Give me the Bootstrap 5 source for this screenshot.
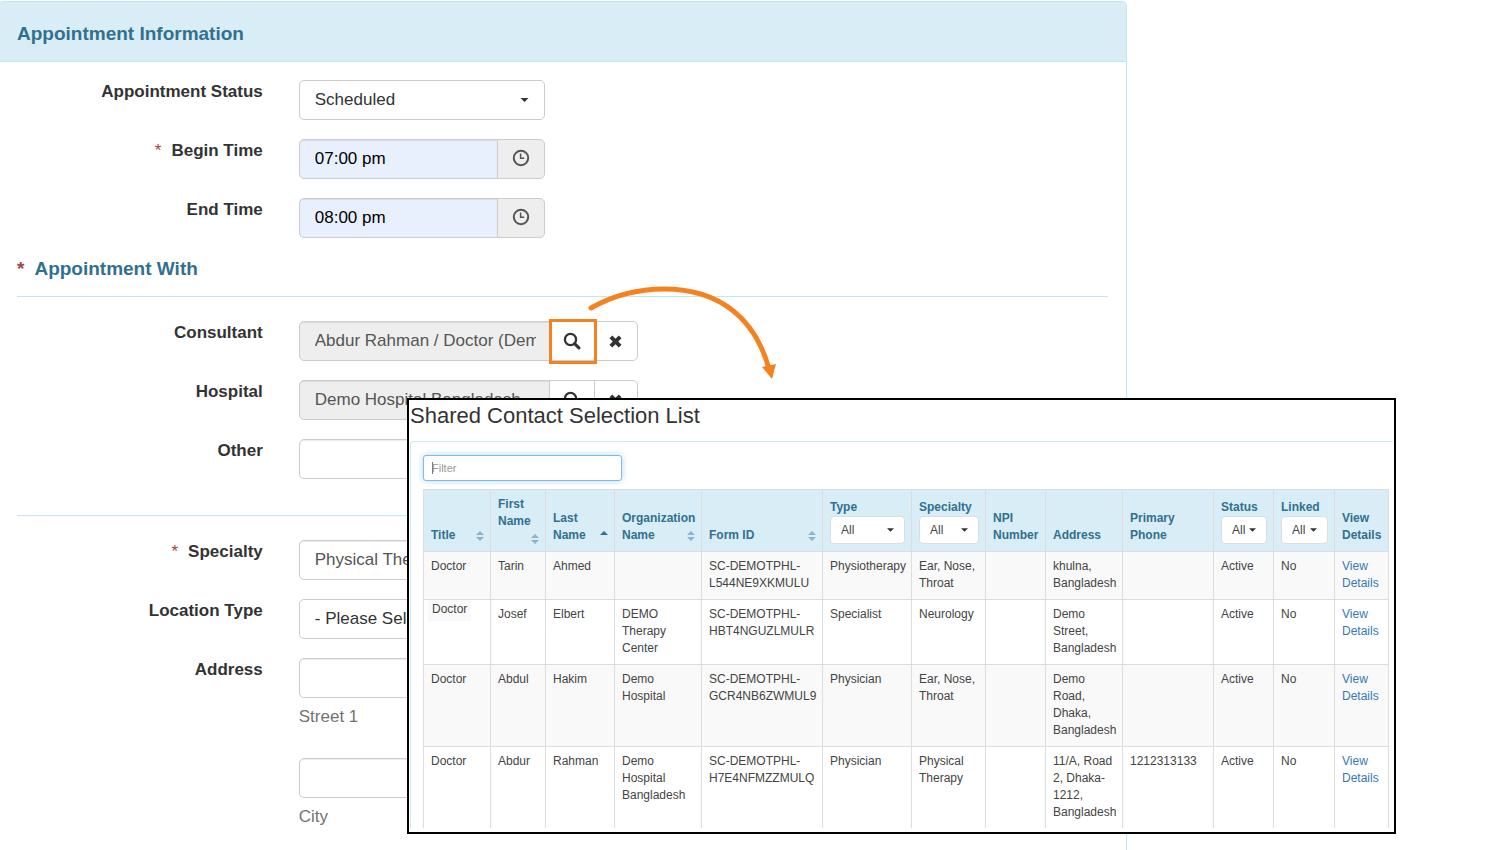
<!DOCTYPE html>
<html lang="en">
<head>
<meta charset="utf-8">
<meta name="viewport" content="width=device-width, initial-scale=1">
<title>Appointment Information</title>
<link href="https://cdn.jsdelivr.net/npm/bootstrap@5.3.0/dist/css/bootstrap.min.css" rel="stylesheet">
<style>
  :root { --line: #bce8f1; --head: #d9edf7; --ink: #31708f; --accent: #f58220; }
  body { font-family: "Liberation Sans", Arial, sans-serif; font-size: 17px; line-height: 24px; color: #333; }
  .page-grid { display: grid; grid-template-columns: minmax(0, 1129fr) 383fr; margin-left: -2px; padding-top: 1px; min-height: 100vh; overflow: hidden; }
  .info-panel { border: 1px solid var(--line); border-bottom: 0; border-radius: 5px 5px 0 0; }
  .info-head { background: var(--head); border-bottom: 1px solid var(--line); padding: 20px 18px 15px; border-radius: 4px 4px 0 0; }
  .info-title { font-size: 19px; line-height: 24px; font-weight: 700; color: var(--ink); margin: 0; }
  .star { color: #a94442; margin-right: 10px; }
  .field-label .star { font-weight: 400; }
  .info-form { padding: 18px 18px 0; }
  .info-form .row { --bs-gutter-x: 36px; margin-bottom: 19px; }
  .info-form .field-label { text-align: right; font-weight: 700; line-height: 24px; }
  .section-line { border-bottom: 1px solid var(--line); margin-bottom: 24px; padding-bottom: 15px; }
  .section-gap { padding-top: 2px; }
  .form-control, .form-select { font-size: 17px; line-height: 24px; height: 40px; padding: 6px 15px; border-color: #ccc; border-radius: 5px; color: #333; }
  .form-control { box-shadow: inset 0 1px 1px rgba(0,0,0,.08); color: #555; }
  .form-select { background-image: url("data:image/svg+xml,%3Csvg xmlns='http://www.w3.org/2000/svg' viewBox='0 0 8 4'%3E%3Cpath fill='%23333' d='M0 0h8L4 4z'/%3E%3C/svg%3E"); background-size: 9px 4px; background-position: right 15px center; }
  .w-time { width: 246px; max-width: 100%; }
  .w-pick { width: 339px; max-width: 100%; }
  .time-box { background: #e8f0fe; color: #000; }
  .form-control[readonly].locked { background: #eee; padding-right: 13px; }
  .time-btn, .pick-btn { display: flex; align-items: center; justify-content: center; padding: 0; border: 1px solid #ccc; border-radius: 5px; }
  .time-btn { width: 48px; padding-bottom: 3px; background: #eee; color: #555; }
  .pick-btn { width: 46px; background: #fff; color: #333; }
  .pick-btn:last-child { width: 44px; }
  .input-group .picked { z-index: 6; }
  .picked::after { content: ""; position: absolute; inset: -3px -3px -4px -1px; border: 3px solid var(--accent); }
  .arrow { position: absolute; left: 285px; top: -38px; z-index: 7; pointer-events: none; }
  .help { color: #737373; margin-top: 7px; }
  .address-next { padding-top: 10px; }

  .contact-box { position: absolute; left: 409px; top: 398px; width: 989px; border: 2px solid #000; background: #fff; z-index: 10; padding: 0 1px 4px; font-size: 12px; line-height: 17px; color: #444; }
  .contact-title { font-size: 22px; line-height: 32px; margin: 0 0 9px; color: #333; }
  .contact-body { border: 1px solid #c8eef4; border-width: 1px 0 0 1px; border-radius: 4px 0 0 0; padding: 13px 4px 0 12px; }
  .form-control.filter { width: 199px; height: 26px; font-size: 11px; line-height: 16px; padding: 4px 8px; border-color: #7db9ea; border-radius: 3px; box-shadow: 0 0 6px rgba(102,175,233,.5); margin-bottom: 8px; background: linear-gradient(#777, #777) 8px center / 1px 12px no-repeat #fff; }
  .filter::placeholder { color: #999; }
  .contacts { table-layout: fixed; width: 100%; border-collapse: collapse; }
  .contacts th, .contacts td { border: 1px solid #ddd; padding: 6px 0 7px 7px; vertical-align: top; }
  .contacts th { background: var(--head); color: var(--ink); vertical-align: bottom; position: relative; height: 62px; }
  .contacts tbody tr:nth-child(odd) td { background: #f9f9f9; }
  .contacts tbody tr:last-child td { border-bottom: 0; }
  .contacts a { color: #337ab7; text-decoration: none; }
  .contacts .sort { position: absolute; right: 6px; bottom: 10px; }
  .contacts th.tight { padding-bottom: 21px; }
  .contacts .tight .sort { bottom: 7px; }
  .contacts th.pick-col { padding-right: 6px; }
  .contacts .form-select { font-size: 12px; line-height: 16px; height: 28px; padding: 4px 10px; border-color: #ddd; border-radius: 4px; background-size: 7px 4px; background-position: right 10px center; color: #444; font-weight: 400; }
  .contacts label { display: block; }
  .contacts td.tag-cell { padding: 0 0 0 4px; }
  .tag { display: inline-block; background: #f9f9f9; padding: 1px 4px 3px; }
</style>
</head>
<body>
<main class="page-grid position-relative">
  <section class="info-panel">
    <header class="info-head"><h1 class="info-title">Appointment Information</h1></header>
    <form class="info-form">
      <div class="row">
        <label class="col-3 field-label" for="status">Appointment Status</label>
        <div class="col-9"><select class="form-select w-time" id="status"><option>Scheduled</option></select></div>
      </div>
      <div class="row">
        <label class="col-3 field-label" for="begin"><span class="star">*</span>Begin Time</label>
        <div class="col-9"><div class="input-group w-time">
          <input class="form-control time-box" id="begin" value="07:00 pm">
          <button class="btn time-btn" type="button" aria-label="Pick begin time"><svg width="18" height="18" viewBox="0 0 18 18" fill="none" stroke="currentColor" stroke-width="2"><circle cx="9" cy="9" r="7.2"/><path d="M8.6 4.5v4.8h3.6" stroke-width="1.5"/></svg></button>
        </div></div>
      </div>
      <div class="row">
        <label class="col-3 field-label" for="end">End Time</label>
        <div class="col-9"><div class="input-group w-time">
          <input class="form-control time-box" id="end" value="08:00 pm">
          <button class="btn time-btn" type="button" aria-label="Pick end time"><svg width="18" height="18" viewBox="0 0 18 18" fill="none" stroke="currentColor" stroke-width="2"><circle cx="9" cy="9" r="7.2"/><path d="M8.6 4.5v4.8h3.6" stroke-width="1.5"/></svg></button>
        </div></div>
      </div>

      <div class="section-line"><h2 class="info-title"><span class="star">*</span>Appointment With</h2></div>

      <div class="row">
        <label class="col-3 field-label" for="consultant">Consultant</label>
        <div class="col-9"><div class="position-relative w-pick">
          <div class="input-group">
            <input class="form-control locked" id="consultant" readonly value="Abdur Rahman / Doctor (Demo Hospital)">
            <button class="btn pick-btn picked" type="button" aria-label="Find consultant"><svg width="18" height="18" viewBox="0 0 18 18" fill="none" stroke="currentColor"><circle cx="7.5" cy="7.5" r="5.6" stroke-width="2.3"/><path d="M11.6 11.6l4.3 4.3" stroke-width="3" stroke-linecap="round"/></svg></button>
            <button class="btn pick-btn" type="button" aria-label="Clear consultant"><svg width="13" height="13" viewBox="0 0 14 14" stroke="currentColor" stroke-width="4.2"><path d="M2 2l10 10M12 2L2 12"/></svg></button>
          </div>
          <svg class="arrow" width="200" height="100" viewBox="0 0 200 100" fill="none"><path d="M7 25C30 12 55 6 80 6C138 6 172 38 185 86" stroke="#f58220" stroke-width="5" stroke-linecap="round"/><path d="M178 84l14-3-4 15z" fill="#f58220"/></svg>
        </div></div>
      </div>
      <div class="row">
        <label class="col-3 field-label" for="hospital">Hospital</label>
        <div class="col-9"><div class="input-group w-pick">
          <input class="form-control locked" id="hospital" readonly value="Demo Hospital Bangladesh">
          <button class="btn pick-btn" type="button" aria-label="Find hospital"><svg width="18" height="18" viewBox="0 0 18 18" fill="none" stroke="currentColor"><circle cx="7.5" cy="7.5" r="5.6" stroke-width="2.3"/><path d="M11.6 11.6l4.3 4.3" stroke-width="3" stroke-linecap="round"/></svg></button>
          <button class="btn pick-btn" type="button" aria-label="Clear hospital"><svg width="13" height="13" viewBox="0 0 14 14" stroke="currentColor" stroke-width="4.2"><path d="M2 2l10 10M12 2L2 12"/></svg></button>
        </div></div>
      </div>
      <div class="row">
        <label class="col-3 field-label" for="other">Other</label>
        <div class="col-9"><input class="form-control w-pick" id="other"></div>
      </div>

      <div class="section-line section-gap"></div>

      <div class="row">
        <label class="col-3 field-label" for="specialty"><span class="star">*</span>Specialty</label>
        <div class="col-9"><input class="form-control w-pick" id="specialty" value="Physical Therapy"></div>
      </div>
      <div class="row">
        <label class="col-3 field-label" for="location">Location Type</label>
        <div class="col-9"><select class="form-select w-time" id="location"><option>- Please Select -</option></select></div>
      </div>
      <div class="row">
        <label class="col-3 field-label" for="street">Address</label>
        <div class="col-9"><input class="form-control w-pick" id="street"><div class="help">Street 1</div></div>
      </div>
      <div class="row justify-content-end address-next">
        <div class="col-9"><input class="form-control w-pick" id="city" aria-label="City"><div class="help">City</div></div>
      </div>
    </form>
  </section>

  <section class="contact-box">
    <h2 class="contact-title">Shared Contact Selection List</h2>
    <div class="contact-body">
      <input class="form-control filter" placeholder="Filter" aria-label="Filter">
      <table class="contacts">
        <colgroup><col style="width:67px"><col style="width:55px"><col style="width:69px"><col style="width:87px"><col style="width:121px"><col style="width:89px"><col style="width:74px"><col style="width:60px"><col style="width:77px"><col style="width:91px"><col style="width:60px"><col style="width:61px"><col></colgroup>
        <thead><tr>
          <th>Title<svg class="sort" width="8" height="10" viewBox="0 0 8 10" fill="#8db4c9"><path d="M0 4h8L4 0zM0 6h8L4 10z"/></svg></th>
          <th class="tight">First Name<svg class="sort" width="8" height="10" viewBox="0 0 8 10" fill="#8db4c9"><path d="M0 4h8L4 0zM0 6h8L4 10z"/></svg></th>
          <th>Last<br>Name<svg class="sort" width="8" height="10" viewBox="0 0 8 10" fill="#31708f"><path d="M0 4h8L4 0z"/></svg></th>
          <th>Organization Name<svg class="sort" width="8" height="10" viewBox="0 0 8 10" fill="#8db4c9"><path d="M0 4h8L4 0zM0 6h8L4 10z"/></svg></th>
          <th>Form ID<svg class="sort" width="8" height="10" viewBox="0 0 8 10" fill="#8db4c9"><path d="M0 4h8L4 0zM0 6h8L4 10z"/></svg></th>
          <th class="pick-col"><label for="f-type">Type</label><select class="form-select" id="f-type"><option>All</option></select></th>
          <th class="pick-col"><label for="f-spec">Specialty</label><select class="form-select" id="f-spec"><option>All</option></select></th>
          <th>NPI Number</th>
          <th>Address</th>
          <th>Primary<br>Phone</th>
          <th class="pick-col"><label for="f-status">Status</label><select class="form-select" id="f-status"><option>All</option></select></th>
          <th class="pick-col"><label for="f-linked">Linked</label><select class="form-select" id="f-linked"><option>All</option></select></th>
          <th>View Details</th>
        </tr></thead>
        <tbody>
          <tr><td>Doctor</td><td>Tarin</td><td>Ahmed</td><td></td><td>SC-DEMOTPHL-<br>L544NE9XKMULU</td><td>Physiotherapy</td><td>Ear, Nose, Throat</td><td></td><td>khulna,<br>Bangladesh</td><td></td><td>Active</td><td>No</td><td><a href="#">View<br>Details</a></td></tr>
          <tr><td class="tag-cell"><span class="tag">Doctor</span></td><td>Josef</td><td>Elbert</td><td>DEMO<br>Therapy<br>Center</td><td>SC-DEMOTPHL-<br>HBT4NGUZLMULR</td><td>Specialist</td><td>Neurology</td><td></td><td>Demo<br>Street,<br>Bangladesh</td><td></td><td>Active</td><td>No</td><td><a href="#">View<br>Details</a></td></tr>
          <tr><td>Doctor</td><td>Abdul</td><td>Hakim</td><td>Demo<br>Hospital</td><td>SC-DEMOTPHL-<br>GCR4NB6ZWMUL9</td><td>Physician</td><td>Ear, Nose, Throat</td><td></td><td>Demo<br>Road,<br>Dhaka,<br>Bangladesh</td><td></td><td>Active</td><td>No</td><td><a href="#">View<br>Details</a></td></tr>
          <tr><td>Doctor</td><td>Abdur</td><td>Rahman</td><td>Demo<br>Hospital<br>Bangladesh</td><td>SC-DEMOTPHL-<br>H7E4NFMZZMULQ</td><td>Physician</td><td>Physical Therapy</td><td></td><td>11/A, Road<br>2, Dhaka-<br>1212,<br>Bangladesh</td><td>1212313133</td><td>Active</td><td>No</td><td><a href="#">View<br>Details</a></td></tr>
        </tbody>
      </table>
    </div>
  </section>
</main>
<script src="https://cdn.jsdelivr.net/npm/bootstrap@5.3.0/dist/js/bootstrap.bundle.min.js"></script>
</body>
</html>
